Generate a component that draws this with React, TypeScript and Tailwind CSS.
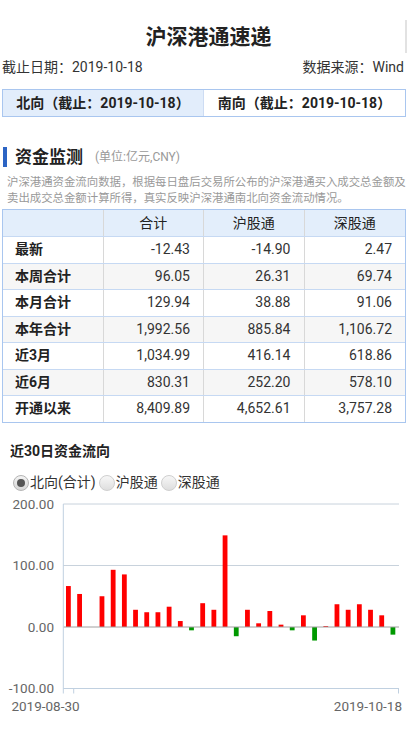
import React from "react";

const rows: [string, string, string, string][] = [
  ["最新", "-12.43", "-14.90", "2.47"],
  ["本周合计", "96.05", "26.31", "69.74"],
  ["本月合计", "129.94", "38.88", "91.06"],
  ["本年合计", "1,992.56", "885.84", "1,106.72"],
  ["近3月", "1,034.99", "416.14", "618.86"],
  ["近6月", "830.31", "252.20", "578.10"],
  ["开通以来", "8,409.89", "4,652.61", "3,757.28"],
];

const values = [
  66.6, 53.7, 0, 50, 93, 85.5, 28, 24, 24, 33, 9.7, -5.4, 38.7, 28, 149, -15,
  28, 6, 26, 3.8, -5.4, 19, -22, 1.5, 37, 28, 37, 28, 19, -12.43,
];

function Radio({ checked }: { checked?: boolean }) {
  return checked ? (
    <span className="w-[16px] h-[16px] rounded-full border border-[#b5b5b5] bg-gradient-to-b from-[#f4f4f4] to-[#d6d6d6] flex items-center justify-center">
      <span className="w-[8px] h-[8px] rounded-full bg-[#555]" />
    </span>
  ) : (
    <span className="w-[16px] h-[16px] rounded-full border border-[#cfcfcf] bg-gradient-to-b from-[#f7f7f7] to-[#dedede]" />
  );
}

function Chart() {
  const y0 = 134;
  const k = 0.615;
  const left = 63.3;
  const right = 399;
  const step = (right - left) / 30;
  const grid = [
    { v: 200, label: "200.00" },
    { v: 100, label: "100.00" },
    { v: 0, label: "0.00" },
    { v: -100, label: "-100.00" },
  ];
  return (
    <svg width={409} height={230} className="block" style={{ fontFamily: "Roboto, 'Noto Sans CJK SC', sans-serif" }}>
      {grid.map((g) => {
        const y = y0 - g.v * k;
        return (
          <g key={g.v}>
            {g.v !== 0 && g.v !== -100 && (
              <line x1={left} x2={right} y1={y} y2={y} stroke="#c8d2dc" strokeWidth={1} />
            )}
            <text x={54} y={y + 4.8} textAnchor="end" fontSize={13.5} fill="#666">
              {g.label}
            </text>
          </g>
        );
      })}
      {values.map((v, i) => {
        if (v === 0) return null;
        const x = left + step * i + 2.7;
        const h = Math.abs(v) * k;
        const y = v > 0 ? y0 - h : y0;
        return <rect key={i} x={x} y={y} width={4.8} height={h} fill={v > 0 ? "#ff0000" : "#009900"} />;
      })}
      <line x1={left} x2={right} y1={y0} y2={y0} stroke="#a0a0a0" strokeWidth={1} />
      <line x1={left} x2={right} y1={y0 + 100 * k} y2={y0 + 100 * k} stroke="#c0d0e0" strokeWidth={1} />
      <line x1={left} x2={left} y1={11} y2={y0 + 100 * k + 5} stroke="#c0d0e0" strokeWidth={1} />
      <line x1={73.7} x2={73.7} y1={y0 + 100 * k} y2={y0 + 100 * k + 5} stroke="#c0d0e0" strokeWidth={1} />
      <line x1={398.5} x2={398.5} y1={y0 + 100 * k} y2={y0 + 100 * k + 5} stroke="#c0d0e0" strokeWidth={1} />
      <text x={45.5} y={217.5} textAnchor="middle" fontSize={13.5} fill="#666">
        2019-08-30
      </text>
      <text x={402} y={217.5} textAnchor="end" fontSize={13.5} fill="#666">
        2019-10-18
      </text>
    </svg>
  );
}

export default function App() {
  return (
    <div
      className="relative w-[409px] h-[729px] bg-white overflow-hidden text-[#333]"
      style={{ fontFamily: "Roboto, 'Noto Sans CJK SC', sans-serif" }}
    >
      <div className="absolute right-[2px] top-[20px] w-[2px] h-[33px] bg-[#e2e2e2]" />
      <div className="pt-[20px] h-[54px] leading-[34px] text-center text-[21px] font-bold text-[#222] pl-[8px]">
        沪深港通速递
      </div>
      <div className="mt-[2px] h-[22px] flex items-center justify-between pl-[2px] pr-[5px] text-[14px] text-[#333]">
        <span>截止日期：2019-10-18</span>
        <span>数据来源：Wind</span>
      </div>
      <div className="mt-[11px] ml-[2px] w-[404px] h-[28px] flex border border-[#a9c6ef] text-[14px] font-bold text-[#222]">
        <div className="w-[201px] bg-[#e2edfb] flex items-center justify-center border-r border-[#cddcf3]">
          北向（截止：2019-10-18）
        </div>
        <div className="flex-1 flex items-center justify-center">南向（截止：2019-10-18）</div>
      </div>
      <div className="mt-[30px] h-[20px] flex items-center">
        <div className="ml-[3px] w-[4px] h-[20px] bg-[#2c64c4]" />
        <span className="ml-[8px] text-[17px] font-bold text-[#222] leading-[20px]">资金监测</span>
        <span className="ml-[12px] text-[12px] text-[#999] leading-[20px]">(单位:亿元,CNY)</span>
      </div>
      <div className="mt-[7px] pl-[7px] text-[11.4px] leading-[16px] text-[#999] whitespace-nowrap">
        沪深港通资金流向数据，根据每日盘后交易所公布的沪深港通买入成交总金额及
        <br />
        卖出成交总金额计算所得，真实反映沪深港通南北向资金流动情况。
      </div>
      <div className="mt-[3px] ml-[2px] w-[404px] border border-[#a9c6ef] text-[14px]">
        <div className="h-[26px] grid grid-cols-4 bg-[#e3eefb] text-[#222]">
          <div className="border-r border-[#d8d8d8]" />
          <div className="border-r border-[#d8d8d8] flex items-center justify-center">合计</div>
          <div className="border-r border-[#d8d8d8] flex items-center justify-center">沪股通</div>
          <div className="flex items-center justify-center">深股通</div>
        </div>
        {rows.map((r, i) => (
          <div
            key={r[0]}
            className={`h-[26.5px] grid grid-cols-4 border-t border-[#c6d9f3] ${i % 2 === 1 ? "bg-[#f6f6f6]" : "bg-white"}`}
          >
            <div className="border-r border-[#d8d8d8] flex items-center pl-[12px] font-bold text-[#222]">{r[0]}</div>
            <div className="border-r border-[#d8d8d8] flex items-center justify-end pr-[13px] text-[#333]">{r[1]}</div>
            <div className="border-r border-[#d8d8d8] flex items-center justify-end pr-[13px] text-[#333]">{r[2]}</div>
            <div className="flex items-center justify-end pr-[13px] text-[#333]">{r[3]}</div>
          </div>
        ))}
      </div>
      <div className="mt-[18px] h-[20px] leading-[20px] pl-[10px] text-[14px] font-bold text-[#222]">近30日资金流向</div>
      <div className="mt-[12px] h-[20px] flex items-center pl-[13px] text-[14px] text-[#333]">
        <Radio checked />
        <span className="ml-[1px] mr-[3px]">北向(合计)</span>
        <Radio />
        <span className="ml-[1px] mr-[3px]">沪股通</span>
        <Radio />
        <span className="ml-[1px]">深股通</span>
      </div>
      <Chart />
    </div>
  );
}
